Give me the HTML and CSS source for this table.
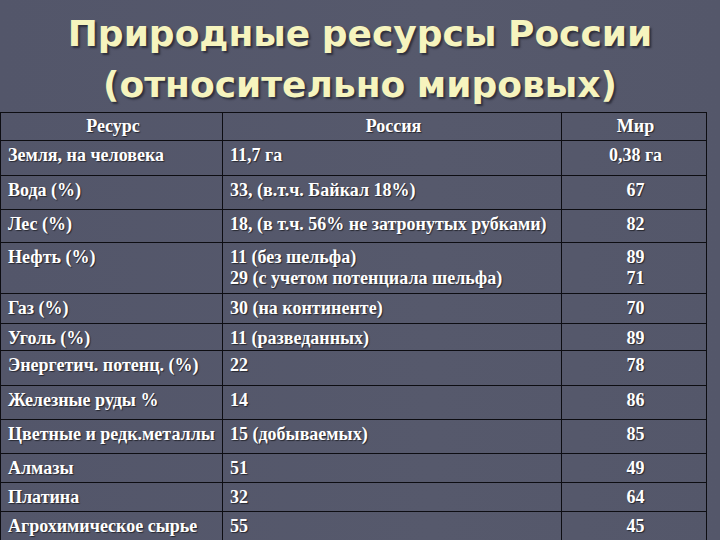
FILE: index.html
```html
<!DOCTYPE html>
<html lang="ru">
<head>
<meta charset="utf-8">
<title>Природные ресурсы России</title>
<link rel="stylesheet" href="styles.css">
</head>
<body>
<div class="slide">
  <h1 class="title">Природные ресурсы России<br>(относительно мировых)</h1>
  <table class="data">
    <colgroup><col class="c1"><col class="c2"><col class="c3"></colgroup>
    <tr class="h28"><th>Ресурс</th><th>Россия</th><th>Мир</th></tr>
    <tr class="h35"><td>Земля, на человека</td><td>11,7 га</td><td class="num">0,38 га</td></tr>
    <tr class="h34"><td>Вода (%)</td><td>33, (в.т.ч. Байкал 18%)</td><td class="num">67</td></tr>
    <tr class="h33"><td>Лес (%)</td><td>18, (в т.ч. 56% не затронутых рубками)</td><td class="num">82</td></tr>
    <tr class="h51"><td>Нефть (%)</td><td>11 (без шельфа)<br>29 (с учетом потенциала шельфа)</td><td class="num">89<br>71</td></tr>
    <tr class="h30"><td>Газ (%)</td><td>30 (на континенте)</td><td class="num">70</td></tr>
    <tr class="h27"><td>Уголь (%)</td><td>11 (разведанных)</td><td class="num">89</td></tr>
    <tr class="h35"><td>Энергетич. потенц. (%)</td><td>22</td><td class="num">78</td></tr>
    <tr class="h34"><td>Железные руды %</td><td>14</td><td class="num">86</td></tr>
    <tr class="h34"><td>Цветные и редк.металлы</td><td>15 (добываемых)</td><td class="num">85</td></tr>
    <tr class="h29"><td>Алмазы</td><td>51</td><td class="num">49</td></tr>
    <tr class="h29"><td>Платина</td><td>32</td><td class="num">64</td></tr>
    <tr class="h30"><td>Агрохимическое сырье</td><td>55</td><td class="num">45</td></tr>
  </table>
</div>
</body>
</html>
```
FILE: styles.css
```css
html, body {
  margin: 0;
  padding: 0;
  background: #55586b;
}
.slide {
  width: 720px;
  height: 540px;
  overflow: hidden;
  background: linear-gradient(90deg, #53566a 0%, #56596c 60%, #54576a 100%);
}
.title {
  margin: 0;
  padding-top: 8px;
  font-family: "DejaVu Sans", Verdana, sans-serif;
  font-weight: bold;
  font-size: 36px;
  line-height: 51px;
  word-spacing: -1px;
  height: 104px;
  text-align: center;
  color: #f6f4be;
  text-shadow: 2px 2px 2px rgba(20, 20, 30, 0.6);
}
.data {
  border-collapse: collapse;
  table-layout: fixed;
  width: 706px;
  font-family: "Liberation Serif", "Times New Roman", serif;
  font-weight: bold;
  font-size: 18px;
  line-height: 21px;
  color: #ffffff;
  text-shadow: 1px 1px 1px rgba(0, 0, 0, 0.55);
}
.c1 { width: 222px; }
.c2 { width: 339px; }
.c3 { width: 145px; }
.data th, .data td {
  border: 1px solid #0d0d12;
  padding: 4px 4px 0 7px;
  vertical-align: top;
  text-align: left;
}
.data th {
  padding-top: 3px;
  text-align: center;
  font-weight: bold;
}
.data td.num { text-align: center; }
.h27 { height: 27px; }
.h28 { height: 28px; }
.h29 { height: 29px; }
.h30 { height: 30px; }
.h33 { height: 33px; }
.h34 { height: 34px; }
.h35 { height: 35px; }
.h51 { height: 51px; }
```
